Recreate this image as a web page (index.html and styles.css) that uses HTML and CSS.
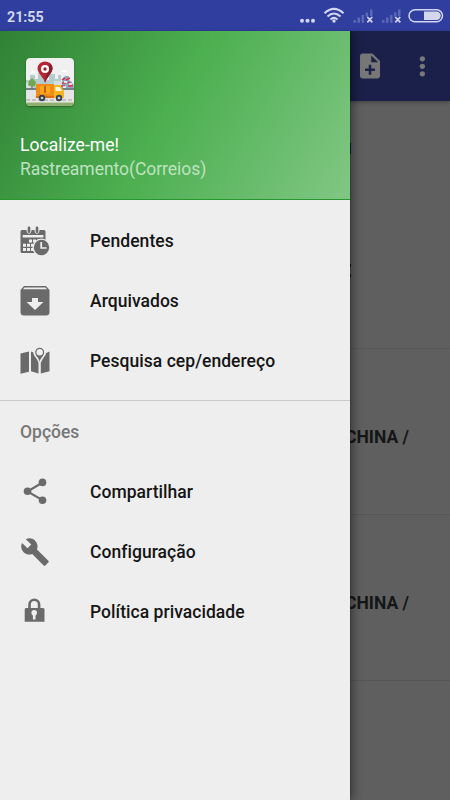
FILE: index.html
```html
<!DOCTYPE html>
<html lang="pt-BR">
<head>
<meta charset="utf-8">
<title>Localize-me!</title>
<link rel="stylesheet" href="styles.css">
</head>
<body>
<div class="screen">
  <header class="status">
    <span class="clock">21:55</span>
    <svg class="status-icons" width="150" height="31" viewBox="0 0 150 31" fill="#d3d6ed">
      <circle cx="2" cy="20.700" r="2"/><circle cx="7.500" cy="20.700" r="2"/><circle cx="13" cy="20.700" r="2"/>
      <g fill="none" stroke="#d3d6ed" stroke-width="2.100">
        <path d="M24.500 13.200Q34 4.700 43.500 13.200"/><path d="M27.500 16.500Q34 10.500 40.500 16.500"/><path d="M30.500 19.500Q34 16.300 37.500 19.500"/>
      </g>
      <circle cx="34" cy="21" r="1.700"/>
      <g fill="#5c68b5">
        <path d="M53.500 20h2.500v2.700h-2.500zM57.500 17.500h2.500v5.200h-2.500zM61.500 15h2.500v7.700h-2.500zM65.500 12.500h2.500v4h-2.500zM70 9.500h2.500v6.500h-2.500z"/>
        <path d="M82 20h2.500v2.700H82zM86 17.500h2.500v5.200H86zM90 15h2.500v7.700H90zM94 12.500h2.500v4H94zM98 9.500h2.500v6.500H98z"/>
      </g>
      <path d="M67.300 17l5 5.400m0-5.400l-5 5.400M95.300 17l5 5.400m0-5.400l-5 5.400" stroke="#d3d6ed" stroke-width="1.700"/>
      <rect x="109" y="9.700" width="33.500" height="12" rx="6" fill="none" stroke="#d3d6ed" stroke-width="1.500"/>
      <path d="M124 11.500h12.500a4.200 4.200 0 0 1 0 8.400H124z"/>
    </svg>
  </header>

  <main class="page">
    <div class="toolbar">
      <svg width="30" height="30" viewBox="0 0 24 24" fill="#777"><path d="M14 2H6C4.900 2 4 2.900 4 4v16c0 1.100.890 2 1.990 2H18c1.100 0 2-.900 2-2V8l-6-6zm2 14h-3v3h-2v-3H8v-2h3v-3h2v3h3v2zm-3-7V3.500L18.500 9H13z"/></svg>
      <svg width="30" height="30" viewBox="0 0 24 24" fill="#777"><circle cx="12.300" cy="6.200" r="2.100"/><circle cx="12.300" cy="12.200" r="2.100"/><circle cx="12.300" cy="18.200" r="2.100"/></svg>
    </div>
    <div class="list">
      <div class="item first"><i class="mark blue"></i><i class="mark upper"></i><i class="mark lower"></i></div>
      <div class="item">CHINA /</div>
      <div class="item">CHINA /</div>
      <div class="item"></div>
    </div>
  </main>

  <aside class="drawer">
    <div class="hero">
      <svg class="logo" width="48" height="48" viewBox="0 0 48 48">
        <defs><clipPath id="tile"><rect width="48" height="48" rx="4"/></clipPath></defs>
        <g clip-path="url(#tile)">
          <path fill="#f1f0f0" d="M0 0h48v48H0z"/>
          <path fill="#fff" d="M4 15q3-5 6 0zM35 14q4-4 7 0z"/>
          <path fill="#b5cccf" d="M4 17h5v4h3v-6h5v7h6v-6h6v5h3v-4h3v9h13v5H0v-9h4z"/>
          <path fill="#d4dfe0" d="M0 25h8v5H0zM28 23h8v7h-8z"/>
          <path fill="#738084" d="M0 30h48v2H0z"/>
          <path fill="#e5e5e6" d="M0 32h48v12H0z"/>
          <path fill="#8fb06c" d="M0 44.500h48V48H0z"/>
          <path d="M0 42h48" stroke="#a49e97" stroke-dasharray="4 2"/>
          <path d="M6 24v7" stroke="#80604d" stroke-width="1.200"/>
          <path fill="#73a650" d="M6 20l2 2 2 2-1 4-3 1-4-2 1-4z"/>
          <path fill="#8fa9c5" d="M37 20l2-2h4v4l3 2 2 6H34l2-3z"/>
          <path d="M36 22l3-2m1 2l4-2m-8 5h4m2-1l4 3m-11 1h4m3 0h5" stroke="#d6384a" stroke-width="1.700"/>
          <path d="M38 24h3m2 2h3m-9 3h3" stroke="#fff" stroke-width="1.300"/>
          <path fill="#f18a16" d="M10 26h18v14H10z"/>
          <path fill="#db6d13" d="M10 38h18v2H10z"/>
          <path fill="#ffa51f" d="M14 28h10v8H14z"/><path fill="#bd6418" d="M18 28h2v7h-2z"/>
          <path fill="#fbb31b" d="M28 27h6l4 6v7H28z"/>
          <path fill="#f7f6e9" d="M29.500 29h4l2.500 4h-6.500z"/>
          <circle cx="16" cy="40" r="3.200" fill="#34434d"/><circle cx="16" cy="40" r="1.300" fill="#ccd4d7"/>
          <circle cx="33" cy="40" r="3.200" fill="#34434d"/><circle cx="33" cy="40" r="1.300" fill="#ccd4d7"/>
          <path fill="#b52532" d="M19 25C18 20 11.500 15 11.500 10.500a7.500 7 0 0 1 15 0C26.500 15 20 20 19 25z"/>
          <path fill="#861f2b" d="M19 25c1-5 7.500-10 7.500-14.500A7.500 7 0 0 0 23 4.600C25 13 19 15 19 25z"/>
          <circle cx="19" cy="11" r="4" fill="#fff"/><circle cx="19" cy="11" r="1.700" fill="#8f2331"/>
        </g>
      </svg>
      <div class="title">Localize-me!</div>
      <div class="subtitle">Rastreamento(Correios)</div>
    </div>
    <nav class="menu">
      <div class="entry">
        <svg class="icon" viewBox="0 0 30 30">
          <path d="M2 4h4.500c0 5 5 5 5 0h3c0 5 5 5 5 0H24q1.500 0 1.500 1.500V27H2Q.5 27 .5 25.500v-20Q.5 4 2 4z"/>
          <path d="M9 1.800v4M17 1.800v4" stroke="#6a6a6a" stroke-width="2.600" stroke-linecap="round"/>
          <path fill="#eee" d="M2.700 9h20.800v2.500H2.700zM9 13.500h3v3H9zm4 0h3v3h-3zm4 0h3v3h-3zM3 17.700h3v3H3zm4 0h3v3H7zm4 0h3v3h-3zM3 22h3v3H3zm4 0h3v3H7zm4 0h3v3h-3z"/>
          <circle cx="21.500" cy="21.500" r="9" fill="#eee"/><circle cx="21.500" cy="21.500" r="7.700"/>
          <path d="M21.200 16v6h5.300" fill="none" stroke="#eee" stroke-width="1.700"/>
        </svg>
        <span>Pendentes</span>
      </div>
      <div class="entry">
        <svg class="icon" viewBox="0 0 30 30">
          <path d="M4 0h22l3.500 4v22q0 3.500-3.500 3.500H4Q.5 29.500.5 26V4z"/>
          <path fill="#eee" d="M4.500 1.500h21L27 3.300H3zM12 12h6v4h5.500L15 24l-8.500-8H12z"/>
        </svg>
        <span>Arquivados</span>
      </div>
      <div class="entry">
        <svg class="icon" viewBox="0 0 30 30">
          <path d="M.5 7.500l8.500-2v20.200l-8.500 2zM11 5.500l7.500 2.800v19.200L11 25.300zM20.800 9.500l8.700-4v19.800l-8.700 2.200z"/>
          <path d="M19.700 16c-.5-4-5-6-5-9.800a5 5 0 0 1 10 0c0 3.800-4.500 5.800-5 9.800z" fill="#eee" stroke="#eee" stroke-width="3"/>
          <path d="M19.700 16c-.5-4-4.500-6-4.500-9.700a4.500 4.500 0 0 1 9 0c0 3.700-4 5.700-4.500 9.700z"/>
          <circle cx="19.700" cy="6.300" r="3.200" fill="#eee"/>
        </svg>
        <span>Pesquisa cep/endereço</span>
      </div>
      <div class="heading">Opções</div>
      <div class="entry">
        <svg class="icon" viewBox="0 0 30 30">
          <path d="M22.500 5.500l-15 9 15 8.700" fill="none" stroke="#6a6a6a" stroke-width="2.100"/>
          <circle cx="22.500" cy="5.400" r="3.800"/><circle cx="7.500" cy="14.300" r="3.800"/><circle cx="22.500" cy="23.200" r="3.800"/>
        </svg>
        <span>Compartilhar</span>
      </div>
      <div class="entry">
        <svg class="icon" viewBox="0 0 24 24"><path d="M22.700 19l-9.100-9.100c.900-2.300.400-5-1.500-6.900-2-2-5-2.400-7.400-1.300L9 6 6 9 1.600 4.700C.4 7.100.9 10.100 2.900 12.100c1.900 1.900 4.600 2.400 6.900 1.500l9.100 9.100c.4.400 1 .4 1.400 0l2.300-2.300c.5-.4.500-1.100.1-1.400z"/></svg>
        <span>Configuração</span>
      </div>
      <div class="entry">
        <svg class="icon" viewBox="0 0 30 30">
          <path d="M9.500 13V7.500a4.800 4.800 0 0 1 9.600 0V13" fill="none" stroke="#6a6a6a" stroke-width="2.600"/>
          <path d="M6 11h17q1.500 0 1.500 1.500v12.200H4.700V12.500Q4.700 11 6 11z"/>
          <circle cx="14.200" cy="15.800" r="2.800" fill="#eee"/><path fill="#eee" d="M12.900 17h2.600v5.500h-2.600z"/>
        </svg>
        <span>Política privacidade</span>
      </div>
    </nav>
  </aside>
</div>
</body>
</html>
```
FILE: styles.css
```css
* { box-sizing: border-box; }
body {
  margin: 0;
  font-family: Roboto, "Liberation Sans", sans-serif;
}
.screen {
  position: relative;
  display: flex;
  flex-direction: column;
  width: 450px;
  height: 800px;
  overflow: hidden;
  background: #5f5f5f;
}
.status {
  display: flex;
  justify-content: space-between;
  align-items: center;
  flex: none;
  height: 31px;
  padding-left: 7px;
  background: #303f9f;
}
.clock {
  padding-top: 2px;
  font-size: 14.2px;
  font-weight: 700;
  color: #d3d6ed;
}
.status-icons { display: block; }
.page {
  display: flex;
  flex-direction: column;
  flex: 1;
}
.toolbar {
  display: flex;
  justify-content: flex-end;
  align-items: center;
  gap: 22px;
  height: 70px;
  padding-right: 13px;
  background: #1a2049;
  box-shadow: 0 1px 4px rgba(0, 0, 0, .35);
}
.item {
  display: flex;
  align-items: center;
  height: 166px;
  padding: 10px 0 0 345px;
  border-bottom: 1px solid #565656;
  font-size: 17.5px;
  font-weight: 700;
  color: #161616;
}
.item.first {
  flex-direction: column;
  align-items: flex-start;
  height: 248px;
  padding: 42px 0 0 350px;
}
.mark {
  width: 1px;
  height: 3px;
  background: #161616;
}
.mark.blue {
  height: 11px;
  background: #111754;
}
.mark.upper { margin-top: 110px; }
.mark.lower { margin-top: 7px; }
.item:last-child { border: 0; }
.drawer {
  position: absolute;
  top: 31px;
  left: 0;
  bottom: 0;
  width: 350px;
  background: #eee;
  box-shadow: 0 0 1px #111, 3px 0 9px rgba(0, 0, 0, .4);
  clip-path: inset(0 -20px 0 0);
}
.hero {
  height: 169px;
  padding: 27px 20px 0;
  background: linear-gradient(119.7deg, #2e7d32, #4caf50 50%, #81c784) left bottom / 350px 200px no-repeat;
  border-bottom: 1px solid #289631;
  background-origin: border-box;
  font-size: 17.5px;
}
.logo {
  display: block;
  margin-left: 6px;
  border-radius: 4px;
  box-shadow: 0 1px 2px rgba(0, 0, 0, .35);
}
.title {
  margin-top: 27px;
  line-height: 24px;
  letter-spacing: .06px;
  color: #fff;
}
.subtitle {
  line-height: 24px;
  letter-spacing: -.04px;
  color: #bfe2c0;
}
.menu { padding-top: 11px; }
.entry {
  display: flex;
  align-items: center;
  gap: 40px;
  height: 60px;
  padding-left: 20px;
  font-size: 17.5px;
  font-weight: 500;
  letter-spacing: .04px;
  color: #151515;
}
.icon {
  width: 30px;
  height: 30px;
  fill: #6a6a6a;
}
.heading {
  height: 62px;
  margin-top: 9px;
  border-top: 1px solid #c9c9c9;
  padding-left: 20px;
  font-size: 17.5px;
  font-weight: 500;
  line-height: 62px;
  color: #777;
}
```
